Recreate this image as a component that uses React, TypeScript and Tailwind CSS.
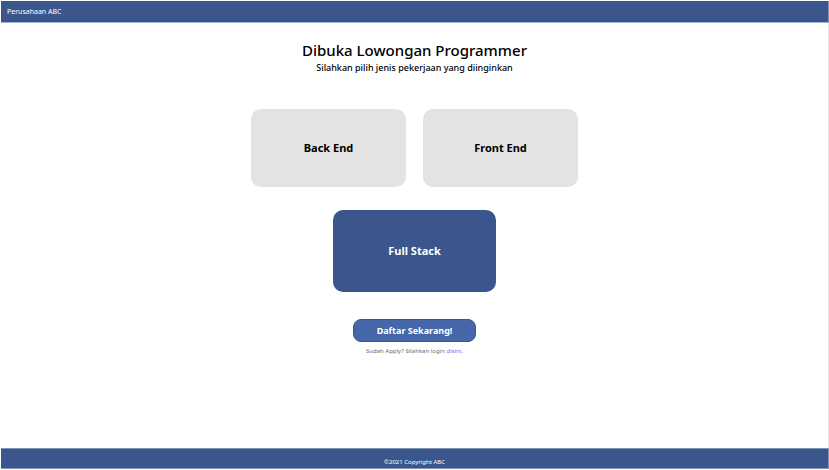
import { useState } from "react";

const jobs = [
  { id: "back", label: "Back End" },
  { id: "front", label: "Front End" },
  { id: "full", label: "Full Stack" },
];

export default function App() {
  const [selected, setSelected] = useState("full");

  return (
    <div className="flex min-h-screen flex-col bg-white pt-px pb-px pl-px font-['Noto_Sans',sans-serif] text-black">
      <header className="flex h-[22px] items-center border-r border-b border-r-[#7f94b9] border-b-[#9fb2d0] bg-[#3a568c] px-[6px] text-[7px] leading-[10px] text-white">
        Perusahaan ABC
      </header>

      <main className="flex grow flex-col items-center border-r border-[#e4e4e4] pt-[17px]">
        <h1 className="text-[15px] leading-[20px] font-medium">Dibuka Lowongan Programmer</h1>
        <p className="text-[9px] leading-[16px] font-medium">Silahkan pilih jenis pekerjaan yang diinginkan</p>

        <div className="mt-[33px] flex max-w-[340px] flex-wrap items-center justify-center gap-x-[17px] gap-y-[23px]">
          {jobs.map((job) => (
            <button
              key={job.id}
              type="button"
              aria-pressed={selected === job.id}
              onClick={() => setSelected(job.id)}
              className={
                selected === job.id
                  ? "h-[82px] w-[163px] rounded-[10px] bg-[#3a568c] text-[11px] font-bold text-white"
                  : "h-[78px] w-[155px] rounded-[10px] bg-[#e3e3e3] text-[11px] font-bold text-black"
              }
            >
              {job.label}
            </button>
          ))}
        </div>

        <button
          type="button"
          className="mt-[27px] h-[23px] w-[123px] rounded-[8px] border border-[#3a568c] bg-[#4667a9] text-[9px] leading-[14px] font-bold text-white"
        >
          Daftar Sekarang!
        </button>
        <p className="mt-[4px] text-[6px] leading-[10px] text-[#6c6c6c]">
          Sudah Apply? Silahkan login{" "}
          <a href="#login" className="text-[#5b7cf5]">
            disini.
          </a>
        </p>
      </main>

      <footer className="flex h-[21px] items-end justify-center border-y border-r border-[#7f94b9] bg-[#3a568c] pb-px text-[6px] leading-[10px] text-white">
        ©2021 Copyright ABC
      </footer>
    </div>
  );
}
